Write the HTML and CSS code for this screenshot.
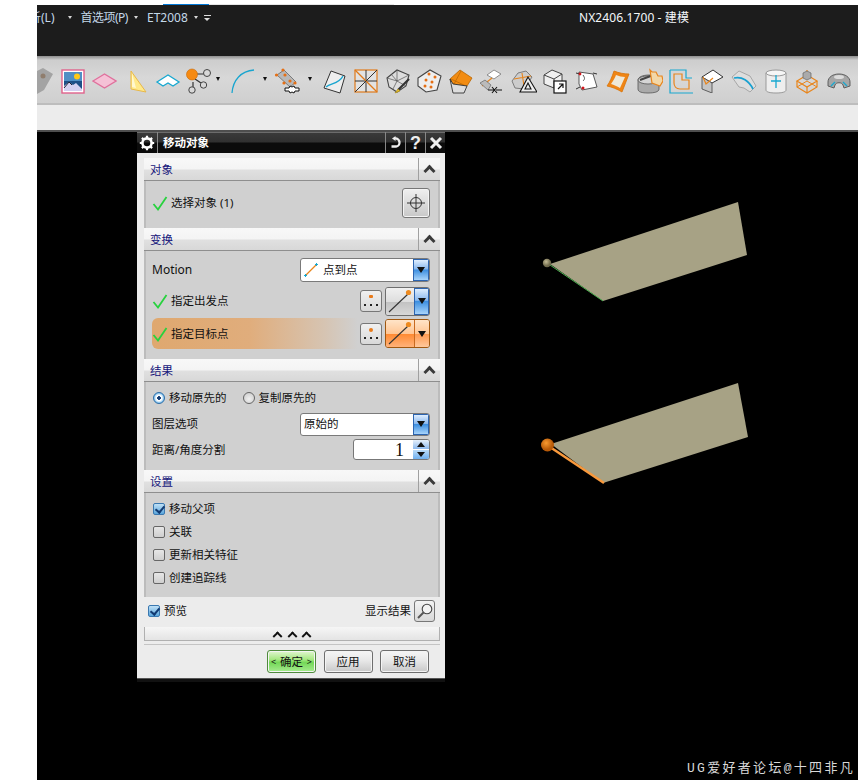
FILE: index.html
```html
<!DOCTYPE html>
<html lang="zh">
<head>
<meta charset="utf-8">
<title>移动对象</title>
<link rel="stylesheet" href="styles.css">
</head>
<body>
<div class="page">
  <div class="topline"><span class="tab-blue"></span><span class="tab-grey"></span></div>
  <header class="titlebar">
    <nav class="menu">
      <span class="menu-cut">分析(L)</span><i class="tri tri-a"></i>
      <span class="menu-item menu-pref">首选项(P)</span><i class="tri tri-b"></i>
      <span class="menu-item">ET2008</span><i class="tri tri-c"></i>
      <span class="menu-more"></span>
    </nav>
    <div class="app-title">NX2406.1700 - 建模</div>
  </header>
  <div class="toolbar">
    <span class="tool tool-first"><svg width="16" height="26" viewBox="0 0 16 26"><path d="M0 3l6-3 10 6-9 16-7 4z" fill="#a3a3a3"/><circle cx="6" cy="8" r="2.500" fill="#8f7d6d"/></svg></span>
    <span class="tool"><svg width="24" height="25" viewBox="0 0 24 25"><rect x="1" y="1" width="22" height="23" fill="#fff" stroke="#e0628c" stroke-width="1.400"/><rect x="3" y="3" width="18" height="19" fill="#1d4f86"/><path d="M3 3h18v9H3z" fill="#4f8fc4"/><circle cx="16" cy="7.500" r="3" fill="#ffc917"/><path d="M3 22v-5l5-4 4 3 3-2 6 6v2z" fill="#d4d0f0"/><path d="M3 19l5-6 3 3" stroke="#223" fill="none"/></svg></span>
    <span class="tool"><svg width="25" height="24" viewBox="0 0 25 24"><path d="M1 12l11.500-7 11.500 7-11.500 7z" fill="#f5c1d6" stroke="#e0709c" stroke-width="1.300"/></svg></span>
    <span class="tool"><svg width="24" height="25" viewBox="0 0 24 25"><path d="M7 2l15 21-15-3z" fill="#ffe98a" stroke="#e8b84a" stroke-width="1"/><path d="M8 4l4 15-4-1z" fill="#fff8d0"/></svg></span>
    <span class="tool"><svg width="26" height="24" viewBox="0 0 26 24"><path d="M2 13l11-7 11 7-6 4-5-3-5 3z" fill="#fff" stroke="#18a8d0" stroke-width="1.300"/></svg></span>
    <span class="tool tool-drop">
      <svg width="26" height="26" viewBox="0 0 26 26"><path d="M10 6h10M10 11l6 4M8 14v6" stroke="#333" stroke-width="1.200" fill="none"/><circle cx="7" cy="6.500" r="5.500" fill="#f68a12" stroke="#c86a08" stroke-width=".6"/><circle cx="22" cy="5" r="3.500" fill="#d8d8d8" stroke="#444" stroke-width="1"/><circle cx="18.500" cy="17" r="3.200" fill="#d8d8d8" stroke="#444" stroke-width="1"/><circle cx="7" cy="22" r="3.200" fill="#d8d8d8" stroke="#444" stroke-width="1"/></svg>
      <i class="tri-dark"></i>
    </span>
    <span class="tool tool-drop tool-drop-wide">
      <svg width="26" height="26" viewBox="0 0 26 26"><path d="M3 25C4 12 12 3 25 2" stroke="#19a5cf" stroke-width="1.300" fill="none"/></svg>
      <i class="tri-dark"></i>
    </span>
    <span class="tool tool-drop tool-drop-wide">
      <svg width="26" height="26" viewBox="0 0 26 26"><path d="M3 7l7-5 12 12-6 5z" fill="#b8b8b8" stroke="#666" stroke-width=".8"/><g fill="#e56f15"><circle cx="2.500" cy="7" r="1.600"/><circle cx="9" cy="2" r="1.600"/><circle cx="11" cy="7" r="1.600"/><circle cx="10" cy="15" r="1.600"/><circle cx="16" cy="13" r="1.600"/><circle cx="21" cy="15" r="1.600"/></g><path d="M11 20h4l1-2 2 1 2-1 1 2h4v3h-4l-1 2-2-1-2 1-1-2h-4z" fill="#fff" stroke="#111" stroke-width="1"/></svg>
      <i class="tri-dark"></i>
    </span>
    <span class="tool"><svg width="24" height="25" viewBox="0 0 24 25"><path d="M8 2l14 5-5 17-16-5z" fill="#eee" stroke="#333" stroke-width="1"/><path d="M3 18C8 14 16 15 20 7" stroke="#19a5cf" stroke-width="1.400" fill="none"/></svg></span>
    <span class="tool"><svg width="24" height="24" viewBox="0 0 24 24"><rect x="1" y="1" width="22" height="22" fill="#e2e2e2" stroke="#e07a1a" stroke-width="1.200"/><path d="M12 1v11M1 12h11M23 12H12v11" stroke="#333" fill="none"/><path d="M1 1l22 22" stroke="#e07a1a" stroke-width="1.200"/><path d="M23 1L12 12M1 23l11-11" stroke="#333"/></svg></span>
    <span class="tool"><svg width="26" height="26" viewBox="0 0 26 26"><path d="M2 10l10-8 12 5-3 11-9 6-8-5z" fill="#ddd" stroke="#444" stroke-width="1.100"/><path d="M2 10l10 3 12-6M12 2v11l-4 8M12 13l9 5M6 6l6 7" stroke="#555" stroke-width=".7" fill="none"/><path d="M24 11L13 22" stroke="#333" stroke-width="2.200"/><path d="M13 21l2 2-5 2z" fill="#e8c030" stroke="#a88810" stroke-width=".6"/></svg></span>
    <span class="tool"><svg width="26" height="26" viewBox="0 0 26 26"><path d="M2 10l12-8 11 6-4 14-11 2-8-6z" fill="#eee" stroke="#444" stroke-width="1.100"/><g fill="#e56f15"><circle cx="13" cy="6" r="1.500"/><circle cx="19" cy="9" r="1.500"/><circle cx="10" cy="12" r="1.500"/><circle cx="16" cy="14" r="1.500"/><circle cx="9" cy="18" r="1.500"/><circle cx="15" cy="19" r="1.500"/></g></svg></span>
    <span class="tool"><svg width="24" height="25" viewBox="0 0 24 25"><path d="M1 10l10-9 12 8-5 8-14-2z" fill="#f28c12" stroke="#b86400" stroke-width=".8"/><path d="M2 10l15 7M12 2l-7 13" stroke="#b86400" stroke-width=".7"/><path d="M1 10l3 14 11 0 3-7-14-2z" fill="#ddd" stroke="#333" stroke-width=".9"/></svg></span>
    <span class="tool"><svg width="26" height="25" viewBox="0 0 26 25"><path d="M8 6l7-5 7 4-7 5z" fill="#fff" stroke="#777" stroke-width=".8"/><path d="M3 17l10-8" stroke="#e8851c" stroke-width="1.300"/><path d="M1 14l5-3 6 5-3 5z" fill="#bbb" stroke="#666" stroke-width=".7"/><path d="M9 21h6M17 21h6M13 18l5 6M18 18l-5 6" stroke="#111" stroke-width="1.100" fill="none"/></svg></span>
    <span class="tool"><svg width="26" height="25" viewBox="0 0 26 25"><path d="M1 12l6-8 8-2 6 6-8 12-9-1z" fill="#ccc" stroke="#666" stroke-width=".8"/><path d="M11 4l2 13M3 10l17-3" stroke="#e8851c" stroke-width="1.100" fill="none"/><path d="M17 8l-8 15h17z" fill="#eee" stroke="#111" stroke-width="1.100"/><path d="M17 14l-3 6h6z" fill="none" stroke="#111" stroke-width="1.100"/></svg></span>
    <span class="tool"><svg width="24" height="25" viewBox="0 0 24 25"><path d="M1 6l8-5 10 4v9l-8 5-10-4z" fill="#f0f0f0" stroke="#444" stroke-width="1"/><path d="M1 6l10 4 8-5M11 10v9" stroke="#444" fill="none"/><rect x="11" y="12" width="12" height="12" fill="#fff" stroke="#111" stroke-width="1.200"/><path d="M15 20l5-5M16 15h4v4" stroke="#111" stroke-width="1.200" fill="none"/></svg></span>
    <span class="tool"><svg width="24" height="22" viewBox="0 0 24 22"><path d="M4 2l14 2 4 13-15 3-3-6z" fill="#fff" stroke="#333" stroke-width=".8"/><path d="M1 3l4 1M18 3l4 1M5 17l-4 2" stroke="#333"/><path d="M8 5c2 3 2 4 0 6" stroke="#555" fill="none"/><circle cx="5" cy="4" r="1.400" fill="#d2151a"/><circle cx="8" cy="18" r="1.500" fill="#d2151a"/></svg></span>
    <span class="tool"><svg width="24" height="25" viewBox="0 0 24 25"><path d="M8 2c5 2 10 3 15 3l-7 18c-5-3-10-5-15-6 3-4 5-9 7-15z" fill="#ef8515" stroke="#d87408" stroke-width=".8" stroke-linejoin="round"/><path d="M10 6c3 1 6 2 9 2l-5 11c-3-2-6-3-9-4 2-3 4-6 5-9z" fill="#eee8d8"/></svg></span>
    <span class="tool"><svg width="26" height="26" viewBox="0 0 26 26"><path d="M1 12c0-3 5-5 11-5s10 2 10 5v9c0 3-5 4-11 4S1 24 1 21z" fill="#aaa" stroke="#555" stroke-width=".8"/><ellipse cx="11" cy="12" rx="10" ry="4" fill="#d5d5d5" stroke="#555" stroke-width=".8"/><path d="M3 12l16-6" stroke="#444" stroke-width="2"/><path d="M13 2l2 2h4l2 4h4l1 5-3 5-8-3z" fill="#f2d7a8" stroke="#e8851c" stroke-width="1.200"/></svg></span>
    <span class="tool"><svg width="24" height="25" viewBox="0 0 24 25"><path d="M1 1v23h23M1 1h16v8h6" fill="none" stroke="#18a8d0" stroke-width="1.200"/><path d="M5 5h8v6h7v9H11c-4 0-6-3-6-6z" fill="none" stroke="#e8851c" stroke-width="1.200"/></svg></span>
    <span class="tool"><svg width="24" height="24" viewBox="0 0 24 24"><path d="M1 8l11-7 10 7-11 6z" fill="#fff" stroke="#333" stroke-width="1"/><path d="M1 8v12l10 4V14z" fill="#c4c4c4" stroke="#444" stroke-width=".8"/><path d="M2 8l3 7 7-6" stroke="#e8851c" stroke-width="1.200" fill="none"/></svg></span>
    <span class="tool"><svg width="26" height="24" viewBox="0 0 26 24"><path d="M1 8l7-6 11 5 6 10-6 6-6-4-5-1z" fill="#ddd" stroke="#999" stroke-width=".8"/><path d="M3 9c8-2 15 3 19 11" stroke="#18a0d0" stroke-width="1.700" fill="none"/></svg></span>
    <span class="tool"><svg width="22" height="25" viewBox="0 0 22 25"><path d="M1 4v17c0 2 4 3 10 3s10-1 10-3V4z" fill="#eee" stroke="#999" stroke-width="1"/><ellipse cx="11" cy="4" rx="10" ry="3" fill="#f6f6f6" stroke="#999"/><path d="M11 6v13M6 12h10" stroke="#18a8d0" stroke-width="1.300"/></svg></span>
    <span class="tool"><svg width="24" height="25" viewBox="0 0 24 25"><path d="M12 6l10 6-10 6-10-6z" fill="none" stroke="#e8851c" stroke-width="1.200"/><path d="M2 12v6l10 6 10-6v-6M12 18v6M12 6v-5" fill="none" stroke="#e8851c" stroke-width="1.200"/><path d="M8 9V4l4-2 4 2v5l-4 2z" fill="#aaa" stroke="#666" stroke-width=".7"/><path d="M2 18L12 12l10 6" stroke="#e8851c" fill="none"/></svg></span>
    <span class="tool"><svg width="24" height="16" viewBox="0 0 24 16"><path d="M1 9c0-5 5-8 11-8s11 3 11 8v4l-6 2-1-3c-1-3-7-3-8 0l-1 3-6-2z" fill="#a6a6a6" stroke="#555" stroke-width=".9"/><ellipse cx="12" cy="4" rx="5" ry="2" fill="#dcdcdc"/><path d="M4 13l4-4M16 9l4 4" stroke="#18a8d0" stroke-width="1.300"/></svg></span>
  </div>
  <div class="ribbon-bottom"></div>

  <main class="canvas">
    <svg class="model" width="821" height="648" viewBox="0 0 821 648">
      <defs><radialGradient id="ballA" cx=".4" cy=".35"><stop offset="0" stop-color="#c5bc96"/><stop offset="1" stop-color="#6f6a4c"/></radialGradient><radialGradient id="ballB" cx=".4" cy=".35"><stop offset="0" stop-color="#f89a30"/><stop offset="1" stop-color="#b85a08"/></radialGradient></defs>
      <path d="M513 132L701 70 710 123 566 169Z" fill="#a7a285"/>
      <path d="M513 133L566 169" stroke="#4caf50" stroke-width="1"/>
      <circle cx="510" cy="131" r="4.200" fill="url(#ballA)"/>
      <path d="M514 312L701 251 711 305 566 351Z" fill="#a7a285"/>
      <path d="M513 315L567 351" stroke="#f9993c" stroke-width="2.400"/>
      <circle cx="510.500" cy="313" r="6.500" fill="url(#ballB)"/>
    </svg>

    <section class="dialog" aria-label="移动对象">
      <div class="dlg-title">
        <span class="dlg-gear"><svg width="16" height="16" viewBox="0 0 16 16"><circle cx="8" cy="8" r="4.600" fill="none" stroke="#fff" stroke-width="2.600"/><path d="M8 .8v2.400M8 12.800v2.400M.8 8h2.400M12.800 8h2.400M2.900 2.900l1.700 1.700M11.400 11.400l1.700 1.700M13.100 2.900l-1.700 1.700M4.600 11.400l-1.700 1.700" stroke="#fff" stroke-width="2.200"/></svg></span>
        <span class="dlg-name">移动对象</span>
        <span class="dlg-btn"><svg width="13" height="13" viewBox="0 0 13 13"><path d="M6 2.500a4 4 0 0 1 1 8H2.500" fill="none" stroke="#eee" stroke-width="2.300"/><path d="M6.500 0v5L3 2.500z" fill="#eee"/></svg></span>
        <span class="dlg-btn dlg-btn-q">?</span>
        <span class="dlg-btn"><svg width="14" height="14" viewBox="0 0 14 14"><path d="M2 2l10 10M12 2L2 12" stroke="#eee" stroke-width="3"/></svg></span>
      </div>

      <div class="dlg-body">
        <div class="group">
          <div class="group-head"><span class="group-label">对象</span><span class="group-toggle"><i class="chev"></i></span></div>
          <div class="group-body group-body-select">
            <div class="row row-select">
              <span class="check"><svg width="16" height="16" viewBox="0 0 16 16"><path d="M1.500 9l4.500 5.500L14.500 2" fill="none" stroke="#27d23e" stroke-width="1.800"/></svg></span>
              <span class="row-label">选择对象 (1)</span>
              <span class="icon-btn"><svg width="20" height="20" viewBox="0 0 20 20"><circle cx="10" cy="10" r="5.500" fill="none" stroke="#333"/><path d="M10 1v18M1 10h18" stroke="#333"/></svg></span>
            </div>
          </div>
        </div>

        <div class="group">
          <div class="group-head"><span class="group-label">变换</span><span class="group-toggle"><i class="chev"></i></span></div>
          <div class="group-body group-body-motion">
            <div class="row row-motion">
              <span class="row-text row-latin">Motion</span>
              <span class="combo combo-motion"><span class="combo-val"><svg width="16" height="16" viewBox="0 0 16 16"><path d="M2.500 13.500L13.500 2.500" stroke="#e8851c" stroke-width="1.200"/><path d="M1 13.500h3M2.500 12v3M12 2.500h3M13.500 1v3" stroke="#18a8d0"/></svg>点到点</span><span class="combo-arrow"><i class="tri-black"></i></span></span>
            </div>
            <div class="row row-point">
              <span class="check"><svg width="16" height="16" viewBox="0 0 16 16"><path d="M1.500 9l4.500 5.500L14.500 2" fill="none" stroke="#27d23e" stroke-width="1.800"/></svg></span>
              <span class="row-label">指定出发点</span>
              <span class="dots-btn"><svg width="20" height="20" viewBox="0 0 20 20"><rect x="8" y="4" width="4" height="3" rx="1" fill="#e87a1a"/><path d="M3 13h2v2H3zM9 13h2v2H9zM15 13h2v2h-2z" fill="#222"/></svg></span>
              <span class="pick"><span class="pick-main"><svg width="28" height="26" viewBox="0 0 28 26"><path d="M3 24L22 6" stroke="#333" stroke-width="1.100"/><circle cx="22.500" cy="4.500" r="2.600" fill="#ee8a1e"/></svg></span><span class="pick-arrow"><i class="tri-black"></i></span></span>
            </div>
            <div class="row row-point row-active">
              <span class="check"><svg width="16" height="16" viewBox="0 0 16 16"><path d="M1.500 9l4.500 5.500L14.500 2" fill="none" stroke="#27d23e" stroke-width="1.800"/></svg></span>
              <span class="row-label">指定目标点</span>
              <span class="dots-btn"><svg width="20" height="20" viewBox="0 0 20 20"><circle cx="10" cy="6" r="2" fill="#e87a1a"/><path d="M3 13h2v2H3zM9 13h2v2H9zM15 13h2v2h-2z" fill="#222"/></svg></span>
              <span class="pick pick-on"><span class="pick-main"><svg width="28" height="26" viewBox="0 0 28 26"><path d="M3 24L22 6" stroke="#333" stroke-width="1.100"/><circle cx="22.500" cy="4.500" r="2.600" fill="#ee8a1e"/></svg></span><span class="pick-arrow"><i class="tri-black"></i></span></span>
            </div>
          </div>
        </div>

        <div class="group">
          <div class="group-head"><span class="group-label">结果</span><span class="group-toggle"><i class="chev"></i></span></div>
          <div class="group-body group-body-result">
            <div class="row row-radio">
              <span class="opt"><i class="radio radio-on"></i>移动原先的</span>
              <span class="opt"><i class="radio"></i>复制原先的</span>
            </div>
            <div class="row row-layer">
              <span class="row-text">图层选项</span>
              <span class="combo combo-layer"><span class="combo-val">原始的</span><span class="combo-arrow"><i class="tri-black"></i></span></span>
            </div>
            <div class="row row-split">
              <span class="row-text">距离/角度分割</span>
              <span class="spin"><span class="spin-val">1</span><span class="spin-arrows"><i class="spin-up"></i><i class="spin-down"></i></span></span>
            </div>
          </div>
        </div>

        <div class="group">
          <div class="group-head"><span class="group-label">设置</span><span class="group-toggle"><i class="chev"></i></span></div>
          <div class="group-body group-body-settings">
            <label class="opt opt-check"><i class="box box-on"></i>移动父项</label>
            <label class="opt opt-check"><i class="box"></i>关联</label>
            <label class="opt opt-check"><i class="box"></i>更新相关特征</label>
            <label class="opt opt-check"><i class="box"></i>创建追踪线</label>
          </div>
        </div>

        <div class="preview-row">
          <label class="opt opt-preview"><i class="box box-on"></i>预览</label>
          <span class="preview-right">显示结果<span class="lens"><svg width="18" height="18" viewBox="0 0 18 18"><circle cx="11" cy="7" r="4.800" fill="#f3f3f3" stroke="#444" stroke-width="1.100"/><path d="M7.500 10.500L2 16" stroke="#555" stroke-width="2"/></svg></span></span>
        </div>

        <div class="more-bar"><i class="chev chev-b"></i><i class="chev chev-b"></i><i class="chev chev-b"></i></div>
        <div class="sep"></div>

        <div class="actions">
          <button class="btn btn-ok"><span>&lt;</span>确定<span>&gt;</span></button>
          <button class="btn">应用</button>
          <button class="btn">取消</button>
        </div>
      </div>
    </section>

    <div class="watermark">UG爱好者论坛@十四非凡</div>
  </main>
</div>
</body>
</html>
```

FILE: styles.css
```css
* { box-sizing: border-box; }
html, body { margin: 0; padding: 0; background: #fff; }
body { font-family: "Noto Sans", "Noto Sans CJK SC", sans-serif; font-size: 12px; color: #111; overflow: hidden; }
i { font-style: normal; display: block; }
svg { display: block; flex: none; }

.page { width: 858px; height: 780px; padding-left: 37px; display: flex; flex-direction: column; overflow: hidden; }

.topline { height: 5px; flex: none; display: flex; align-items: flex-end; margin-left: -37px; padding-left: 163px; }
.tab-blue { width: 46px; height: 1px; background: #0078d7; }
.tab-grey { width: 185px; height: 1px; background: #e6e6e6; }

.titlebar { height: 51px; flex: none; background: #1c1c1c; display: flex; position: relative; }
.menu { display: flex; align-items: center; height: 24px; color: #c4d8e8; overflow: hidden; width: 400px; }
.menu-cut { margin-left: -20px; flex: none; white-space: nowrap; }
.menu-item { white-space: nowrap; flex: none; }
.menu-pref { letter-spacing: -.5px; }
.tri { width: 0; height: 0; border: 2.500px solid transparent; border-top: 3px solid #d8d8d8; border-bottom: 0; flex: none; }
.tri-a { margin: 0 9px 0 13px; }
.tri-b { margin: 0 9px 0 6px; }
.tri-c { margin: 0 6px 0 6px; }
.menu-more { width: 7px; height: 5px; flex: none; border-top: 1px solid #ddd; }
.menu-more::after { content: ""; display: block; margin: 2px 0 0 0; width: 0; height: 0; border: 3.500px solid transparent; border-top: 3px solid #ddd; border-bottom: 0; }
.app-title { position: absolute; left: 542px; top: 5px; color: #f4f8fb; white-space: nowrap; line-height: 16px; letter-spacing: .1px; }

.toolbar { height: 49px; flex: none; padding-top: 3px; background: linear-gradient(#8e8e8e 0, #cdcdcd 4px, #d8d8d8 22px, #cfcfcf 100%); border-bottom: 2px solid #bdbdbd; display: flex; align-items: center; overflow: hidden; }
.tool { width: 31.500px; flex: none; display: flex; align-items: center; justify-content: center; }
.tool-first { width: 20.500px; overflow: hidden; justify-content: flex-start; }
.tool-drop { width: 44px; justify-content: flex-start; margin-left: 1.500px; }
.tool-drop-wide { width: 45px; margin-left: 0; }
.tri-dark { width: 0; height: 0; margin-left: 5px; border: 2.500px solid transparent; border-top: 4px solid #111; border-bottom: 0; margin-top: -4px; }
.tool-drop-wide .tri-dark { margin-left: 8px; }

.ribbon-bottom { height: 25px; flex: none; background: #ececec; }

.canvas { flex: 1; background: #000; position: relative; border-top: 2px solid #4e4e4e; }
.model { position: absolute; left: 0; top: 0; }

.dialog { position: absolute; left: 100px; top: 0; width: 308px; background: #ececec; font-size: 11.500px; box-shadow: 0 1px 0 #555, 0 4px 0 #111; }

.dlg-title { height: 21px; display: flex; align-items: center; color: #fff; background: linear-gradient(#6c6c6c 0, #6c6c6c 1px, #3a3a3a 1px, #303030 10px, #0b0b0b 11px, #0b0b0b 100%); }
.dlg-gear { width: 21px; height: 100%; display: flex; align-items: center; justify-content: center; border-right: 1px solid #888; }
.dlg-name { flex: 1; padding-left: 5px; font-weight: 700; line-height: 16px; }
.dlg-btn { width: 20px; height: 100%; border-left: 1px solid #888; display: flex; align-items: center; justify-content: center; }
.dlg-btn-q { font-weight: 700; font-size: 18px; line-height: 1; color: #eee; font-family: "Liberation Sans", sans-serif; }

.dlg-body { padding: 5px 5px 5px 7px; display: flex; flex-direction: column; }

.group-head { height: 23px; display: flex; background: linear-gradient(#f8f8f8 0, #f4f4f4 11px, #e0e0e0 12px, #d8d8d8 100%); border-bottom: 1px solid #8e8e8e; }
.group-label { flex: 1; padding-left: 6px; color: #15157a; line-height: 24px; }
.group-toggle { width: 22px; border-left: 1px solid #a0a0a0; display: flex; align-items: center; justify-content: center; }
.chev { width: 9px; height: 9px; border-left: 3px solid #3b3b3b; border-top: 3px solid #3b3b3b; transform: rotate(45deg) translate(1px, 1px) scale(.95); }

.group-body { background: #d0d0d0; border-style: solid; border-width: 0 2px; border-color: #bcbcbc; padding: 0 8px 0 6px; }
.group-body-select { height: 47px; padding-bottom: 3px; display: flex; align-items: center; }
.group-body-motion { height: 108px; padding-top: 7px; display: flex; flex-direction: column; }
.group-body-result { height: 88px; padding-top: 6px; display: flex; flex-direction: column; }
.group-body-settings { height: 104px; padding-top: 4px; display: flex; flex-direction: column; }

.row { display: flex; align-items: center; }
.row-select { width: 100%; }
.check { width: 19px; flex: none; }
.row-label, .row-text { flex: 1; line-height: 16px; }
.row-latin { font-size: 12px; }
.icon-btn { width: 28px; height: 30px; border: 1px solid #777; border-radius: 3px; background: linear-gradient(#efefef, #dadada 55%, #c8c8c8); display: flex; align-items: center; justify-content: center; box-shadow: inset 0 0 0 1px #f4f4f4; }

.row-motion { height: 24px; margin-bottom: 4px; }
.combo { width: 130px; height: 24px; display: flex; background: #fff; border: 1px solid #7a7a7a; border-radius: 3px; overflow: hidden; }
.combo-val { flex: 1; display: flex; align-items: center; gap: 4px; padding-left: 2px; line-height: 16px; }
.combo-layer { height: 23px; }
.combo-layer .combo-val { padding-left: 3px; }
.combo-arrow { width: 16px; border: 1px solid #2c64b0; background: linear-gradient(#dfeeff 0, #8ab8ee 45%, #3d8fe0 50%, #a8d4fb 100%); display: flex; align-items: center; justify-content: center; }
.tri-black { width: 0; height: 0; border: 4.500px solid transparent; border-top: 6px solid #111; border-bottom: 0; }

.row-point { height: 30px; margin-bottom: 2px; }
.row-active { height: 31px; margin-bottom: 0; border-radius: 6px; background: linear-gradient(90deg, #dfa86f 0, #e0ad7c 35%, #d6c4b2 62%, #d0d0d0 74%); }
.dots-btn { width: 22px; height: 22px; margin-right: 3px; border: 1px solid #777; border-radius: 3px; background: linear-gradient(#f0f0f0, #e4e4e4 50%, #d8d8d8); }
.pick { width: 45px; height: 29px; flex: none; display: flex; border: 1px solid #6e6e6e; border-radius: 3px; overflow: hidden; }
.pick-main { flex: 1; background: linear-gradient(#f0f0f0, #dedede 50%, #c2c2c2 52%, #d8d8d8); }
.pick-arrow { width: 15px; border: 1px solid #2c64b0; background: linear-gradient(#dfeeff 0, #8ab8ee 45%, #3d8fe0 50%, #a8d4fb 100%); display: flex; align-items: center; justify-content: center; }
.pick-on { border-color: #a05810; }
.pick-on .pick-main { background: linear-gradient(#ffe4c8, #ffc694 50%, #ff8a32 52%, #ffb27a); }
.pick-on .pick-arrow { border: 0; border-left: 1px solid #c86a20; background: linear-gradient(#ffe4c8, #ffc694 50%, #ff9a50 52%, #ffc89c); }

.opt { display: flex; align-items: center; line-height: 16px; }
.row-radio { height: 20px; gap: 15px; margin-bottom: 4px; }
.radio { width: 12px; height: 12px; margin: 0 4px 0 1px; border-radius: 50%; border: 1px solid #666; background: radial-gradient(circle at 50% 60%, #f0f0f0, #c8c8c8); }
.radio-on { border-color: #2d6ea8; background: radial-gradient(circle, #123a72 0, #123a72 22%, #ffffff 27%, #ffffff 40%, #7fc0ee 70%); }
.row-layer { height: 24px; margin-bottom: 3px; }
.row-split { height: 21px; }
.spin { width: 77px; height: 21px; display: flex; background: #fff; border: 1px solid #777; border-radius: 3px; overflow: hidden; }
.spin-val { flex: 1; text-align: right; padding-right: 9px; font-family: "Liberation Serif", serif; font-size: 18px; line-height: 20px; }
.spin-arrows { width: 16px; display: flex; flex-direction: column; background: linear-gradient(#e6f0fb, #8ab8ee 48%, #fff 50%, #bcdcf8 52%, #6fb0ef); align-items: center; justify-content: space-around; }
.spin-up { width: 0; height: 0; border: 4px solid transparent; border-bottom: 5px solid #111; border-top: 0; }
.spin-down { width: 0; height: 0; border: 4px solid transparent; border-top: 5px solid #111; border-bottom: 0; }

.opt-check { height: 23px; }
.box { width: 12px; height: 12px; margin: 0 4px 0 1px; border: 1px solid #666; border-radius: 2px; background: linear-gradient(#e6e6e6, #cfcfcf); flex: none; position: relative; }
.box-on { border-color: #3a78b0; background: linear-gradient(#bfe0f6, #5aa6dc); }
.box-on::after { content: ""; position: absolute; left: 3px; top: 0; width: 4px; height: 7px; border: solid #123a72; border-width: 0 2px 2px 0; transform: rotate(40deg); }

.preview-row { height: 30px; display: flex; align-items: center; padding: 0 5px 2px 3px; }
.opt-preview { flex: 1; }
.preview-right { display: flex; align-items: center; gap: 3px; line-height: 16px; }
.lens { width: 21px; height: 22px; border: 1px solid #777; border-radius: 3px; background: linear-gradient(#f3f3f3, #d8d8d8); display: flex; align-items: center; justify-content: center; }

.more-bar { height: 14px; display: flex; align-items: center; justify-content: center; gap: 7.500px; border: 1px solid #b0b0b0; border-top: 0; background: linear-gradient(#f6f6f6, #e4e4e4); }
.chev-b { width: 7px; height: 7px; border-width: 2.500px 0 0 2.500px; border-color: #111; transform: rotate(45deg) translate(2px, 2px); }
.sep { height: 1px; background: #c4c4c4; margin-top: 3px; }

.actions { display: flex; justify-content: flex-end; gap: 7.500px; padding: 5px 11px 0 0; }
.btn { height: 23px; width: 49px; padding: 0; margin: 0; border: 1px solid #6e6e6e; border-radius: 3px; font: inherit; color: #111; background: linear-gradient(#f5f5f5, #e8e8e8 45%, #c8c8c8 100%); box-shadow: inset 0 0 0 1px #f4f4f4; display: flex; align-items: center; justify-content: center; line-height: 16px; }
.btn-ok { border-color: #4f8a3c; background: linear-gradient(#e2f6d2, #a6e882 40%, #74d858 55%, #a8ec90); justify-content: space-between; padding: 0 3px; }
.btn-ok span { font-size: 9px; }

.watermark { position: absolute; right: 3px; bottom: 3px; color: #d8d8d8; font-family: "Liberation Mono", "Noto Sans CJK SC", monospace; font-size: 13px; font-weight: 400; line-height: 16px; letter-spacing: 2.300px; white-space: nowrap; }
```
